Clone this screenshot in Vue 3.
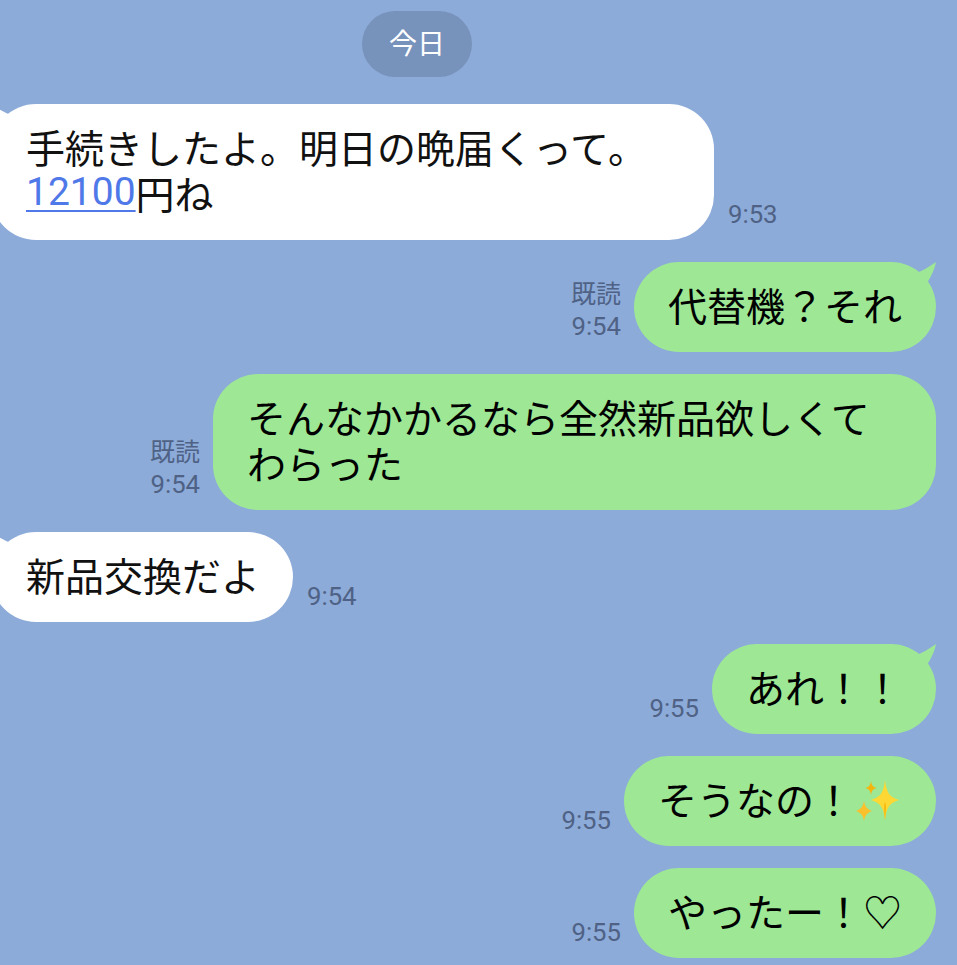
<template>
  <div class="chat">
    <div class="date-wrap">
      <span class="date">今日</span>
    </div>

    <div
      v-for="(msg, i) in messages"
      :key="i"
      class="row"
      :class="msg.mine ? 'row--mine' : 'row--other'"
    >
      <div v-if="msg.mine" class="meta">
        <span v-if="msg.read" class="read">既読</span>
        <span class="time">{{ msg.time }}</span>
      </div>

      <div
        class="bubble"
        :class="[msg.mine ? 'bubble--mine' : 'bubble--other', { 'bubble--wide': msg.lines.length > 1 }]"
      >
        <svg v-if="msg.tail && msg.mine" class="tail tail--mine" viewBox="0 0 24 24" width="24" height="24">
          <path d="M4 11 C10 9 17 5 24 0 C23 6 20 13 15 21 L2 21 Z" fill="#9de795" />
        </svg>
        <svg v-if="msg.tail && !msg.mine" class="tail tail--other" viewBox="0 0 24 24" width="24" height="24">
          <path d="M20 11 C14 9 7 5 0 0 C1 6 4 13 9 21 L22 21 Z" fill="#ffffff" />
        </svg>

        <div v-for="(line, j) in msg.lines" :key="j" class="line">
          <a v-if="line.link" class="link">{{ line.link }}</a>{{ line.text }}
          <svg v-if="line.sparkles" class="sparkles" viewBox="0 0 44 44" width="44" height="44">
            <path d="M29 0 C30.500 12 33 17 43 20 C33 23 30.500 28 29 40 C27.500 28 25 23 15 20 C25 17 27.500 12 29 0 Z" fill="#fdd835" />
            <path d="M29 22 C30 24 30.300 28 29 40 C27.700 28 28 24 29 22 Z" fill="#f5b50f" />
            <path d="M15 1 C15.700 5.500 17 7 20.500 8 C17 9 15.700 10.500 15 15 C14.300 10.500 13 9 9.500 8 C13 7 14.300 5.500 15 1 Z" fill="#f5b50f" />
            <path d="M8 21 C9 26 10.500 29 16 31 C10.500 33 9 36 8 41 C7 36 5.500 33 0 31 C5.500 29 7 26 8 21 Z" fill="#fbc02d" />
          </svg>
        </div>
      </div>

      <div v-if="!msg.mine" class="meta">
        <span class="time">{{ msg.time }}</span>
      </div>
    </div>
  </div>
</template>

<script setup>
const messages = [
  {
    mine: false,
    tail: true,
    time: "9:53",
    lines: [{ text: "手続きしたよ。明日の晩届くって。" }, { link: "12100", text: "円ね" }],
  },
  { mine: true, tail: true, read: true, time: "9:54", lines: [{ text: "代替機？それ" }] },
  {
    mine: true,
    read: true,
    time: "9:54",
    lines: [{ text: "そんなかかるなら全然新品欲しくて" }, { text: "わらった" }],
  },
  { mine: false, tail: true, time: "9:54", lines: [{ text: "新品交換だよ" }] },
  { mine: true, tail: true, time: "9:55", lines: [{ text: "あれ！！" }] },
  { mine: true, time: "9:55", lines: [{ text: "そうなの！", sparkles: true }] },
  { mine: true, time: "9:55", lines: [{ text: "やったー！♡" }] },
];
</script>

<style>
html,
body {
  margin: 0;
  background: #8cabd9;
}
</style>

<style scoped>
.chat {
  box-sizing: border-box;
  height: 965px;
  padding-top: 11px;
  overflow: hidden;
  background: #8cabd9;
  font-family: "Noto Sans CJK JP", "Noto Sans", sans-serif;
}

.date-wrap {
  display: flex;
  justify-content: center;
  margin-bottom: 27px;
  padding-right: 123px;
}

.date {
  width: 110px;
  height: 66px;
  border-radius: 33px;
  background: #7792bb;
  color: #fff;
  font-size: 28px;
  line-height: 62px;
  text-align: center;
}

.row {
  display: flex;
  align-items: flex-end;
  gap: 13px;
  margin-bottom: 22px;
}

.row--mine {
  justify-content: flex-end;
  padding-right: 21px;
}

.row--other {
  gap: 14px;
  margin-left: -9px;
}

.bubble {
  position: relative;
  box-sizing: border-box;
  padding: 19px 34px 25px;
  border-radius: 45px;
  color: #111;
  font-size: 39px;
  line-height: 46px;
  white-space: nowrap;
}

.bubble--wide {
  width: 723px;
}

.bubble--mine {
  background: #9de795;
  color: #000;
}

.bubble--other {
  padding-right: 33px;
  padding-left: 35px;
  background: #fff;
}

.line {
  display: flex;
  align-items: center;
  height: 46px;
}

.link {
  color: #4f78e8;
  font-family: Roboto, "Noto Sans", sans-serif;
  text-decoration: underline;
  text-decoration-thickness: 2px;
  text-underline-offset: 5px;
}

.sparkles {
  margin: 8px 2px 0 3px;
}

.tail {
  position: absolute;
  top: 0;
}

.tail--mine {
  right: 0;
}

.tail--other {
  left: 0;
}

.meta {
  display: flex;
  flex-direction: column;
  align-items: flex-end;
  margin-bottom: 9px;
  color: #4f6285;
  font-size: 25px;
  line-height: 34px;
}

.read {
  margin-bottom: -1px;
  transform: translateY(-1px);
}

.time {
  font-family: Roboto, sans-serif;
  font-size: 25.700px;
}
</style>
